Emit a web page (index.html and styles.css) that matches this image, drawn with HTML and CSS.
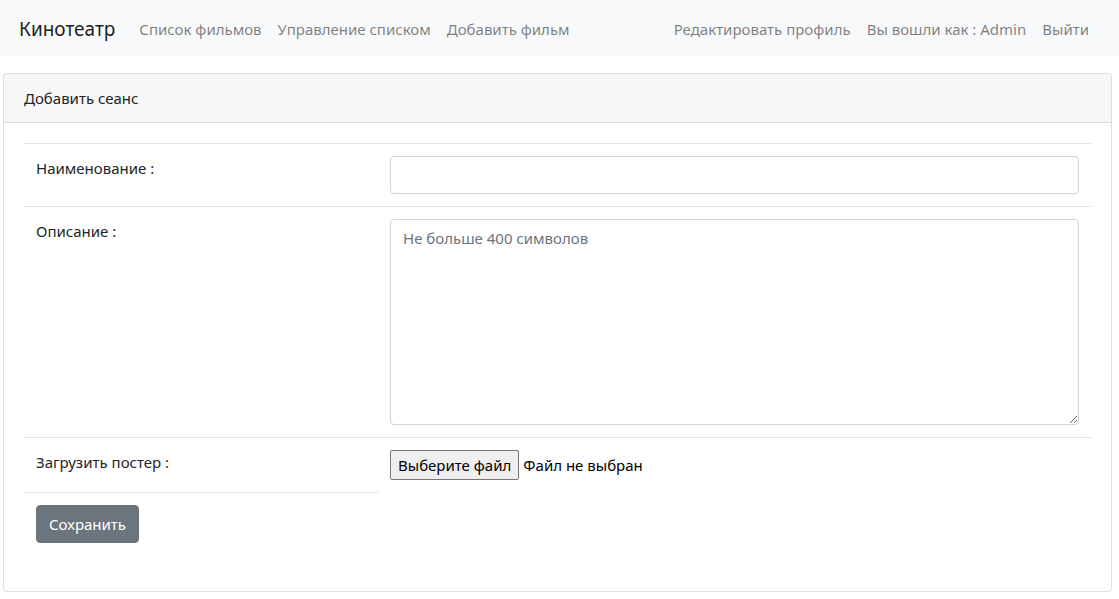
FILE: index.html
```html
<!DOCTYPE html>
<html lang="ru">
<head>
<meta charset="utf-8">
<title>Кинотеатр</title>
<link rel="stylesheet" href="styles.css">
</head>
<body>
<nav class="navbar">
  <a class="brand" href="#">Кинотеатр</a>
  <ul class="nav">
    <li><a class="nav-link" href="#">Список фильмов</a></li>
    <li><a class="nav-link" href="#">Управление списком</a></li>
    <li><a class="nav-link" href="#">Добавить фильм</a></li>
  </ul>
  <ul class="nav nav-right">
    <li><a class="nav-link" href="#">Редактировать профиль</a></li>
    <li><a class="nav-link" href="#">Вы вошли как : Admin</a></li>
    <li><a class="nav-link" href="#">Выйти</a></li>
  </ul>
</nav>
<main class="page">
  <div class="card">
    <div class="card-header">Добавить сеанс</div>
    <div class="card-body">
      <table class="table">
        <tr>
          <td class="label-cell">Наименование :</td>
          <td class="field-cell"><input class="form-control" type="text"></td>
        </tr>
        <tr>
          <td class="label-cell">Описание :</td>
          <td class="field-cell"><textarea class="form-control textarea" rows="8" placeholder="Не больше 400 символов"></textarea></td>
        </tr>
        <tr>
          <td class="label-cell">Загрузить постер :</td>
          <td class="field-cell">
            <div class="file-input">
              <button class="file-btn" type="button">Выберите файл</button>
              <span class="file-name">Файл не выбран</span>
            </div>
          </td>
        </tr>
        <tr>
          <td class="label-cell"><button class="btn-save" type="submit">Сохранить</button></td>
        </tr>
      </table>
    </div>
  </div>
</main>
</body>
</html>
```
FILE: styles.css
```css
* { box-sizing: border-box; }
html, body { margin: 0; padding: 0; }
body {
  font-family: "Noto Sans", "Liberation Sans", sans-serif;
  font-size: 15px;
  line-height: 24px;
  color: #212529;
  background: #fff;
}
a { text-decoration: none; }
.navbar {
  display: flex;
  align-items: center;
  background: #f8f9fa;
  padding: 9px 22px 7px 19px;
  height: 56px;
}
.brand {
  font-size: 19px;
  line-height: 30px;
  color: rgba(0,0,0,.9);
  margin-right: 16px;
  padding: 5px 0;
}
.nav {
  display: flex;
  list-style: none;
  margin: 0;
  padding: 0;
}
.nav-right { margin-left: auto; }
.nav-link {
  display: block;
  padding: 8px 8px;
  color: rgba(0,0,0,.5);
}
.page {
  padding: 17px 7px 0 3px;
}
.card {
  border: 1px solid rgba(0,0,0,.125);
  border-radius: 4px;
  background: #fff;
}
.card-header {
  padding: 12px 20px;
  background: rgba(0,0,0,.03);
  border-bottom: 1px solid rgba(0,0,0,.125);
  border-radius: 3px 3px 0 0;
}
.card-body {
  padding: 20px;
}
.table {
  width: 100%;
  border-collapse: collapse;
  margin-bottom: 16px;
}
.table td {
  padding: 12px;
  border-top: 1px solid #dee2e6;
  vertical-align: top;
}
.label-cell { width: 354px; }
.form-control {
  display: block;
  width: 100%;
  height: 38px;
  padding: 6px 12px;
  font: inherit;
  color: #495057;
  border: 1px solid #ced4da;
  border-radius: 4px;
  background: #fff;
}
.textarea {
  height: 206px;
  resize: vertical;
}
.textarea::placeholder { color: #6c757d; opacity: 1; }
.file-input {
  display: flex;
  align-items: center;
  gap: 4px;
  height: 30px;
}
.file-btn {
  font: inherit;
  color: #000;
  background: #efefef;
  border: 1px solid #767676;
  border-radius: 2px;
  padding: 1px 7px;
  height: 30px;
}
.file-name { color: #000; }
.btn-save {
  font: inherit;
  color: #fff;
  background: #6c757d;
  border: 1px solid #6c757d;
  border-radius: 4px;
  padding: 6px 12px;
  line-height: 24px;
}
```
